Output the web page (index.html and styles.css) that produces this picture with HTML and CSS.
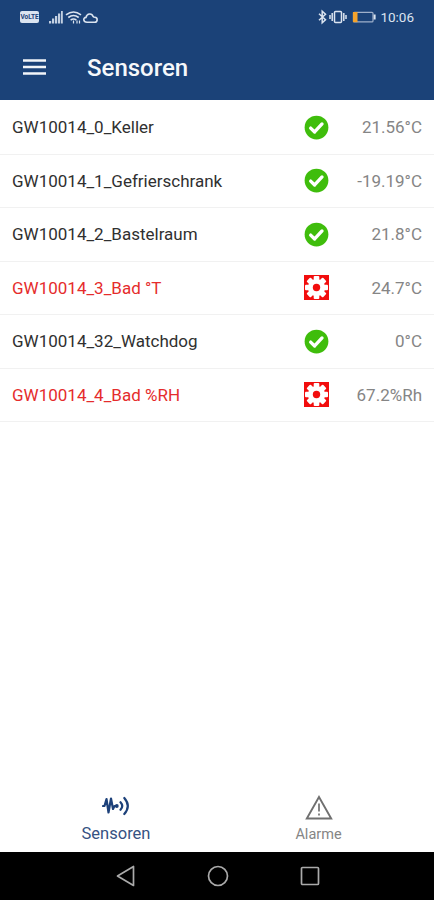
FILE: index.html
```html
<!DOCTYPE html>
<html lang="de">
<head>
  <meta charset="UTF-8">
  <meta name="viewport" content="width=device-width, initial-scale=1.0">
  <title>Sensoren</title>
  <link rel="stylesheet" href="styles.css">
</head>
<body>

<!-- shared icons -->
<svg class="defs" width="0" height="0">
  <symbol id="ok" viewBox="0 0 24 24">
    <circle cx="12" cy="12" r="11.4" fill="#3fbd0c"/>
    <path d="M6.4 12.6l3.8 3.7 7.1-7.700" fill="none" stroke="#fff" stroke-width="3.2" stroke-linecap="round" stroke-linejoin="round"/>
  </symbol>
  <symbol id="gear" viewBox="0 0 25 25">
    <rect width="25" height="25" fill="#f20d0d"/>
    <g fill="#fff">
      <rect x="9.700" y="1" width="5.600" height="23" rx="1"/>
      <rect x="9.700" y="1" width="5.600" height="23" rx="1" transform="rotate(45 12.5 12.5)"/>
      <rect x="9.700" y="1" width="5.600" height="23" rx="1" transform="rotate(90 12.5 12.5)"/>
      <rect x="9.700" y="1" width="5.600" height="23" rx="1" transform="rotate(135 12.5 12.5)"/>
      <circle cx="12.5" cy="12.5" r="8.600"/>
    </g>
    <circle cx="12.5" cy="12.5" r="3.7" fill="#f20d0d"/>
  </symbol>
</svg>

<div class="screen">
  <header>
    <div class="status">
      <span class="volte">VoLTE</span>
      <svg class="signals" width="50" height="16" viewBox="0 0 50 16">
        <g fill="#c3d0e2">
          <rect x="0" y="12" width="2.2" height="2.5"/>
          <rect x="3" y="9.500" width="2.2" height="5"/>
          <rect x="6" y="7" width="2.2" height="7.500"/>
          <rect x="9" y="4.500" width="2.2" height="10"/>
          <rect x="12" y="2" width="1.8" height="12.5"/>
        </g>
        <g fill="none" stroke="#dbe4f0" stroke-width="1.6">
          <path d="M17 5.800q7.500-5.600 15 0M19.300 8.500q5.200-4 10.400 0M21.600 11.100q2.900-2.100 5.800 0"/>
          <path d="M24.500 11.500v3M28 11.500v3M30.500 11.500v3" stroke-width="1.200"/>
          <path d="M38 13.200h7.500a2.500 2.500 0 0 0 .3-5c-.9 0-1.300-.3-1.700-.8-1.200-3.400-6.100-3.200-7.100 1-3.200.3-3 4.800 1 4.800z"/>
        </g>
      </svg>
      <svg class="battery" width="60" height="16" viewBox="0 0 60 16">
        <g fill="none" stroke="#dbe4f0" stroke-width="1.500">
          <path d="M1 4.800l6.500 6-3.300 3V2.200l3.300 3-6.500 6"/>
          <rect x="16.500" y="2.500" width="7" height="11" rx="1"/>
          <path d="M14.200 4v8M12 6v4M25.800 4v8M28 6v4"/>
          <rect x="35.500" y="3.300" width="19.500" height="9.600" rx="1" stroke="#9fb0ca" stroke-width="1.200"/>
        </g>
        <rect x="34.900" y="3" width="4.600" height="10.200" fill="#f5a32c"/>
        <rect x="55.600" y="5.500" width="2" height="5" fill="#dbe4f0"/>
      </svg>
      <span class="time">10:06</span>
    </div>
    <div class="toolbar">
      <svg width="23" height="17" viewBox="0 0 23 17">
        <path d="M0 1.500h23M0 8h23M0 14.500h23" stroke="#f2f5f9" stroke-width="2.600"/>
      </svg>
      <h1>Sensoren</h1>
    </div>
  </header>

  <ul class="list">
    <li><span class="name">GW10014_0_Keller</span><svg class="state"><use href="#ok"/></svg><span class="value">21.56°C</span></li>
    <li><span class="name">GW10014_1_Gefrierschrank</span><svg class="state"><use href="#ok"/></svg><span class="value">-19.19°C</span></li>
    <li><span class="name">GW10014_2_Bastelraum</span><svg class="state"><use href="#ok"/></svg><span class="value">21.8°C</span></li>
    <li class="alarm"><span class="name">GW10014_3_Bad °T</span><svg class="state"><use href="#gear"/></svg><span class="value">24.7°C</span></li>
    <li><span class="name">GW10014_32_Watchdog</span><svg class="state"><use href="#ok"/></svg><span class="value">0°C</span></li>
    <li class="alarm"><span class="name">GW10014_4_Bad %RH</span><svg class="state"><use href="#gear"/></svg><span class="value">67.2%Rh</span></li>
  </ul>

  <nav class="tabs">
    <a class="tab active">
      <svg width="28" height="22" viewBox="0 0 28 22" fill="none" stroke="#1d417a" stroke-width="2.200" stroke-linejoin="round" stroke-linecap="round">
        <path d="M1 11h1.500L4.500 4 6.500 17.500 9 3.500l2 10.500L12.500 11h1.500" stroke-width="2.200"/>
        <circle cx="14.800" cy="11" r="1.900" fill="#1d417a" stroke="none"/>
        <path d="M18.500 7.200q3.500 3.800 0 7.600M22.300 3q7 8 0 16"/>
      </svg>
      <span>Sensoren</span>
    </a>
    <a class="tab">
      <svg width="28" height="25" viewBox="0 0 28 25" fill="none" stroke="#707070" stroke-width="1.900">
        <path d="M14 2L26.200 23.500H1.800z"/>
        <path d="M14 8.500v8M14 18.500v2" stroke-width="1.700"/>
      </svg>
      <span>Alarme</span>
    </a>
  </nav>

  <div class="navbar">
    <svg width="22" height="22" viewBox="0 0 22 22"><path d="M18.500 1.500v19L2.500 11z"/></svg>
    <svg width="22" height="22" viewBox="0 0 22 22"><circle cx="11" cy="11" r="9.500"/></svg>
    <svg width="22" height="22" viewBox="0 0 22 22"><rect x="2.500" y="2.500" width="17" height="17" rx="1"/></svg>
  </div>
</div>

</body>
</html>
```

FILE: styles.css
```css
body { margin: 0; background: #fff; font-family: Roboto, sans-serif; }
.defs { display: block; height: 0; }
.screen { width: 434px; height: 900px; display: flex; flex-direction: column; overflow: hidden; }
svg { display: block; flex: none; }

header { background: #1b4278; height: 100px; flex: none; }
.status { display: flex; align-items: center; height: 34px; padding: 0 20px; color: #dbe4f0; }
.volte { width: 19px; height: 12px; border-radius: 2px; background: #dbe4f0; color: #1b4278; font-size: 6.5px; font-weight: bold; line-height: 12px; text-align: center; }
.signals { margin-left: 10px; }
.battery { margin-left: auto; }
.time { font-size: 13.5px; margin-left: 2px; }
.toolbar { display: flex; align-items: center; height: 66px; padding: 0 23px; }
h1 { margin: 2px 0 0 41px; color: #f6f8fb; font-size: 24px; font-weight: 500; line-height: 30px; }

.list { list-style: none; margin: 0; padding: 1px 0 0; flex: 1; }
.list li { display: flex; align-items: center; box-sizing: border-box; height: 53.5px; padding: 0 12px; border-bottom: 1px solid #f1f1f1; font-size: 17px; }
.name { flex: 1; color: #303030; }
.state { width: 25px; height: 25px; }
.value { width: 93px; text-align: right; color: #858585; }
.alarm .name { color: #e52c2c; }

.tabs { display: flex; height: 62px; padding: 0 14px; flex: none; }
.tab { flex: 1; display: flex; flex-direction: column; align-items: center; color: #858585; font-size: 14.5px; }
.tab svg { margin-top: 5px; }
.tab span { margin-top: 6px; line-height: 18px; }
.active { color: #365282; font-size: 16.5px; }
.tab.active span { margin: 8px 0 0 1px; }

.navbar { box-sizing: border-box; height: 48px; flex: none; display: flex; justify-content: center; gap: 70px; padding: 13px 0 0 1px; background: #000; }
.navbar svg { fill: none; stroke: #aaa; stroke-width: 1.7; stroke-linejoin: round; }
```
